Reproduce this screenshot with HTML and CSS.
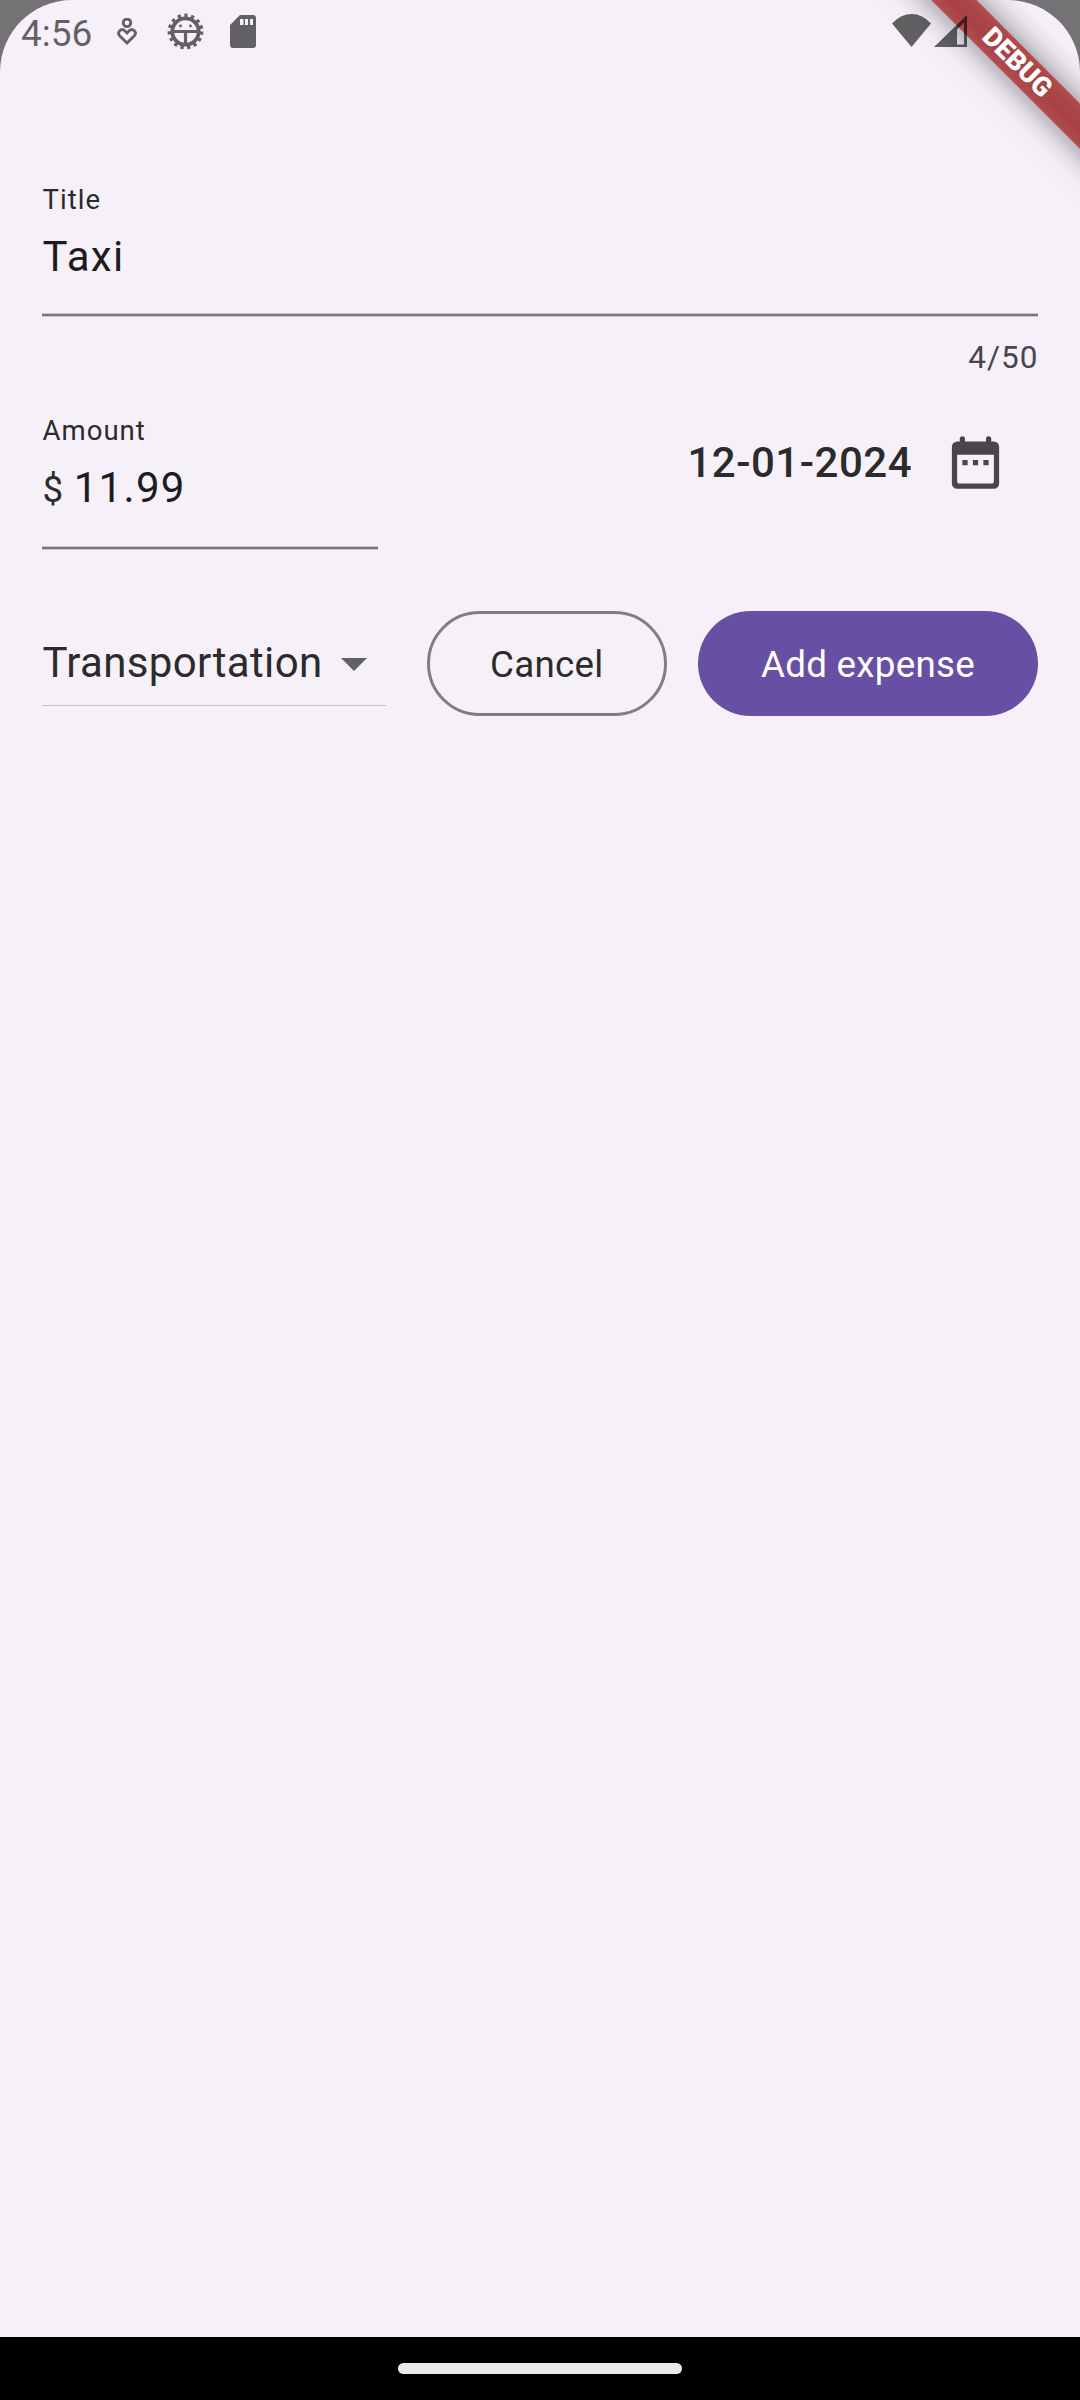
FILE: index.html
```html
<!DOCTYPE html>
<html lang="en">
<head>
<meta charset="utf-8">
<title>Add expense</title>
<link rel="stylesheet" href="styles.css">
</head>
<body>
<div class="device">
  <main class="screen">
    <header class="status">
      <span class="clock">4:56</span>
      <svg class="care" width="20" height="28" viewBox="0 0 20 28" fill="none" stroke="currentColor" stroke-width="2.8"><circle cx="10" cy="4.800" r="3.800"/><path d="M10 25 2.900 18C-.8 14 4.500 9.800 7.800 12.700L10 14.900 12.200 12.700C15.500 9.800 20.800 14 17.100 18Z"/></svg>
      <svg class="bug" width="37" height="37" viewBox="-18.500 -18.500 37 37" fill="none" stroke="currentColor"><circle r="13.200" stroke-width="3.800"/><circle r="15.600" stroke-width="4.600" stroke-dasharray="3.100 3.434" stroke-dashoffset="-26.160"/><path d="M-12 0H12M0 0V12" stroke-width="3.200"/><circle cx="-5" cy="-5.500" r="1.400" fill="currentColor" stroke="none"/><circle cx="5" cy="-5.500" r="1.400" fill="currentColor" stroke="none"/></svg>
      <svg class="sd" width="26" height="33" viewBox="0 0 26 33" fill="currentColor"><path fill-rule="evenodd" d="M10 0H23Q26 0 26 3V30Q26 33 23 33H3Q0 33 0 30V10ZM10 4V10H13.500V4ZM15 4V10H18V4ZM20 4V10H23V4Z"/></svg>
      <span class="grow"></span>
      <svg class="wifi" width="39" height="33" viewBox="0 0 39 33" fill="currentColor"><path d="M0 9.500Q8.500 0 19.500 0T39 9.500L19.500 33Z"/></svg>
      <svg class="signal" width="33" height="32" viewBox="0 0 33 32" fill="currentColor"><path fill-rule="evenodd" d="M33 0V32H0ZM30 7.500 23 14.500V29.500H30Z"/></svg>
    </header>

    <form class="form">
      <section class="field">
        <label class="label">Title</label>
        <div class="value">Taxi</div>
        <div class="rule"></div>
        <div class="counter">4/50</div>
      </section>
      <div class="row">
        <section class="field amount">
          <label class="label">Amount</label>
          <div class="value"><span class="prefix">$ </span>11.99</div>
          <div class="rule"></div>
        </section>
        <div class="date">
          <span class="day">12-01-2024</span>
          <svg width="63" height="63" viewBox="0 0 24 24" fill="#49454f"><path fill-rule="evenodd" d="M6 4V3a1 1 0 0 1 2 0V4H16V3a1 1 0 0 1 2 0V4H19a2 2 0 0 1 2 2V20a2 2 0 0 1-2 2H5a2 2 0 0 1-2-2V6a2 2 0 0 1 2-2ZM5 9V19a1 1 0 0 0 1 1H18a1 1 0 0 0 1-1V9Z"/><path d="M7 11H9V13H7ZM11 11H13V13H11ZM15 11H17V13H15Z"/></svg>
        </div>
      </div>
      <div class="actions">
        <div class="select"><span class="choice">Transportation</span><svg width="26" height="13" viewBox="0 0 10 5"><path d="M0 0H10L5 5Z" fill="#616161"/></svg></div>
        <button type="button" class="btn outlined">Cancel</button>
        <button type="button" class="btn filled">Add expense</button>
      </div>
    </form>
    <div class="ribbon">DEBUG</div>
  </main>
  <footer class="nav"><div class="handle"></div></footer>
</div>
</body>
</html>
```
FILE: styles.css
```css
* { box-sizing: border-box; }
body { margin: 0; background: #747275; font-family: Roboto, "Liberation Sans", sans-serif; color: #2b2b2b; }
svg { display: block; flex: none; }
.device { width: 1080px; height: 2400px; display: flex; flex-direction: column; }
.screen { position: relative; flex: 1; overflow: hidden; background: #f6f1f9; border-radius: 72px 72px 0 0; }

.status { position: relative; z-index: 2; height: 184px; display: flex; align-items: flex-start; padding: 0 113px 0 21px; color: #000; }
.status > * { opacity: .6; }
.clock { margin-top: 12px; width: 96px; font-size: 37px; line-height: 44px; }
.care { margin-top: 18px; }
.bug { margin: 13px 0 0 29.500px; }
.sd { margin: 15px 0 0 26.500px; }
.grow { flex: 1; }
.wifi { margin-top: 14px; }
.signal { margin: 15px 0 0 3px; }

.form { padding: 0 42px; }
.field { display: flex; flex-direction: column; }
.label { padding-left: .6px; font-size: 27.56px; line-height: 32px; letter-spacing: 1px; }
.value { padding-left: .6px; margin-top: 16px; height: 50px; font-size: 42px; line-height: 50px; letter-spacing: 1.31px; color: #1d1b20; white-space: pre; }
.prefix { font-size: 36.75px; letter-spacing: .66px; color: #2b2b2b; }
.rule { margin-top: 31px; height: 4px; background: linear-gradient(#c9c4ce 1px, #79747e 1px 3px, #c9c4ce 3px); }
.counter { margin-top: 22px; text-align: right; font-size: 31.5px; line-height: 38px; letter-spacing: 1.05px; margin-right: -.6px; color: #49454f; }
.row { display: flex; justify-content: space-between; margin-top: 38px; }
.amount { width: 336px; }
.amount .rule { margin-top: 33px; }
.date { display: flex; align-items: flex-start; padding: 16px 31.500px 0 0; }
.day { margin: 7px 31.500px 0 0; font-size: 42px; line-height: 50px; font-weight: 500; letter-spacing: .5px; }

.actions { display: flex; align-items: flex-start; margin-top: 61px; }
.select { width: 344px; height: 95px; margin-right: 41px; padding-top: 27px; display: flex; border-bottom: 1px solid #c3bfc5; }
.choice { width: 299px; padding-left: .4px; font-size: 42px; line-height: 50px; letter-spacing: .36px; }
.select svg { margin-top: 20px; }
.btn { height: 105px; border-radius: 53px; font: 400 36.75px/44px Roboto, sans-serif; letter-spacing: .26px; padding: 2px 0 0; white-space: nowrap; }
.outlined { width: 239.500px; border: 3px solid #817c86; background: none; color: #2b2b2b; }
.filled { width: 340px; margin-left: 31.500px; border: 0; background: #674fa3; color: #fff; }

.ribbon { position: absolute; z-index: 1; left: 806.900px; top: 47.350px; width: 420px; height: 31.500px; transform: rotate(45deg); background: linear-gradient(#b04c4e, #a84446 35% 65%, #b04c4e); box-shadow: 0 0 32px rgba(0, 0, 0, .5); color: #fff; font-size: 26.800px; font-weight: 900; line-height: 31.500px; text-align: center; }

.nav { height: 63px; background: #000; display: flex; justify-content: center; padding-top: 26px; }
.handle { width: 284px; height: 11px; border-radius: 6px; background: #eaeaea; }
```
